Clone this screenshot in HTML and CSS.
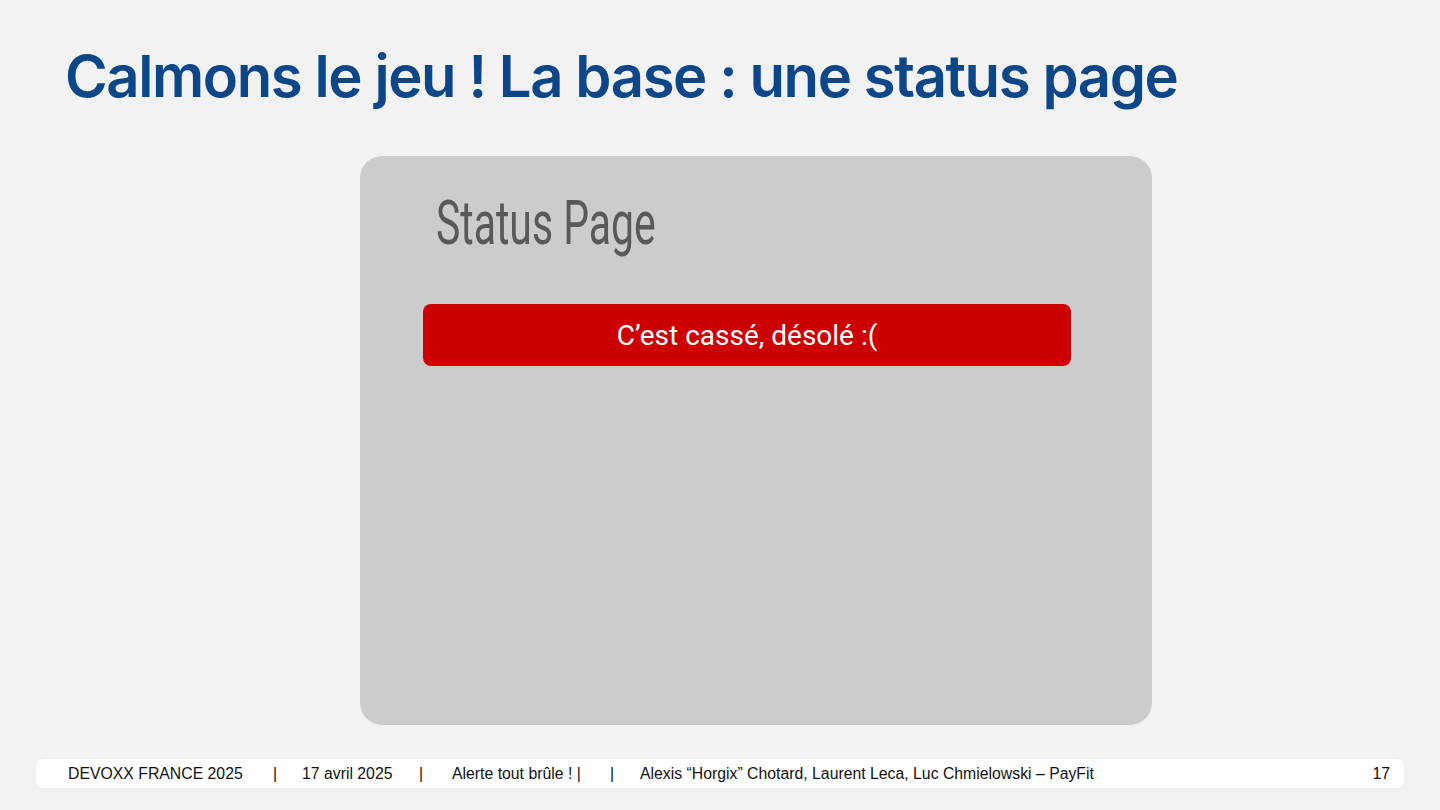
FILE: index.html
```html
<!DOCTYPE html>
<html lang="fr">
<head>
<meta charset="utf-8">
<title>Calmons le jeu</title>
<link rel="stylesheet" href="styles.css">
</head>
<body>
<div class="slide">
  <h1 class="title">Calmons le jeu ! La base : une status page</h1>
  <div class="stage">
    <div class="card">
      <div class="card-head"><span class="card-title">Status Page</span></div>
      <div class="banner">C’est cassé, désolé :(</div>
    </div>
  </div>
  <footer class="footer">
    <span class="f-item f-event">DEVOXX FRANCE 2025</span>
    <span class="f-sep f-sep1">|</span>
    <span class="f-item f-date">17 avril 2025</span>
    <span class="f-sep f-sep2">|</span>
    <span class="f-item f-talk">Alerte tout brûle ! |</span>
    <span class="f-sep f-sep3">|</span>
    <span class="f-item f-authors">Alexis “Horgix” Chotard, Laurent Leca, Luc Chmielowski – PayFit</span>
    <span class="f-num">17</span>
  </footer>
</div>
</body>
</html>
```

FILE: styles.css
```css
* { box-sizing: border-box; }
html, body { margin: 0; padding: 0; }
body {
  background: #f2f2f2;
  width: 1440px;
  height: 810px;
  overflow: hidden;
  font-family: "Liberation Sans", Arial, sans-serif;
}
.slide {
  display: flex;
  flex-direction: column;
  height: 810px;
}
.title {
  margin: 0;
  padding: 36px 0 0 65px;
  height: 156px;
  font-family: Inter, "Liberation Sans", sans-serif;
  font-weight: 600;
  font-size: 58px;
  line-height: 80px;
  letter-spacing: -1.4px;
  color: #0b4788;
}
.stage {
  display: flex;
  padding-left: 360px;
  height: 570px;
}
.card {
  width: 792px;
  height: 569px;
  background: #cccccc;
  border-radius: 22px;
  padding: 0 81px 0 63px;
  display: flex;
  flex-direction: column;
}
.card-head {
  height: 148px;
  padding: 32px 0 0 13px;
}
.card-title {
  display: inline-block;
  font-family: Roboto, "Liberation Sans", sans-serif;
  font-weight: 400;
  font-size: 62px;
  line-height: 70px;
  color: #595959;
  transform: scaleX(0.66);
  transform-origin: left center;
  white-space: nowrap;
}
.banner {
  height: 62px;
  background: #cc0000;
  border-radius: 8px;
  color: #ffffff;
  font-family: Roboto, "Liberation Sans", sans-serif;
  font-size: 28px;
  display: flex;
  align-items: center;
  justify-content: center;
}
.footer {
  margin: 33px 36px 0 36px;
  height: 29px;
  background: #ffffff;
  border-radius: 8px;
  display: flex;
  align-items: center;
  padding: 0 14px 0 32px;
  font-size: 15.8px;
  color: #111111;
  white-space: nowrap;
}
.f-event { width: 205px; }
.f-sep1 { width: 29px; }
.f-date { width: 117px; }
.f-sep2 { width: 33px; }
.f-talk { width: 158px; }
.f-sep3 { width: 30px; }
.f-authors { flex: 1; }
.f-num { margin-left: auto; }
```
